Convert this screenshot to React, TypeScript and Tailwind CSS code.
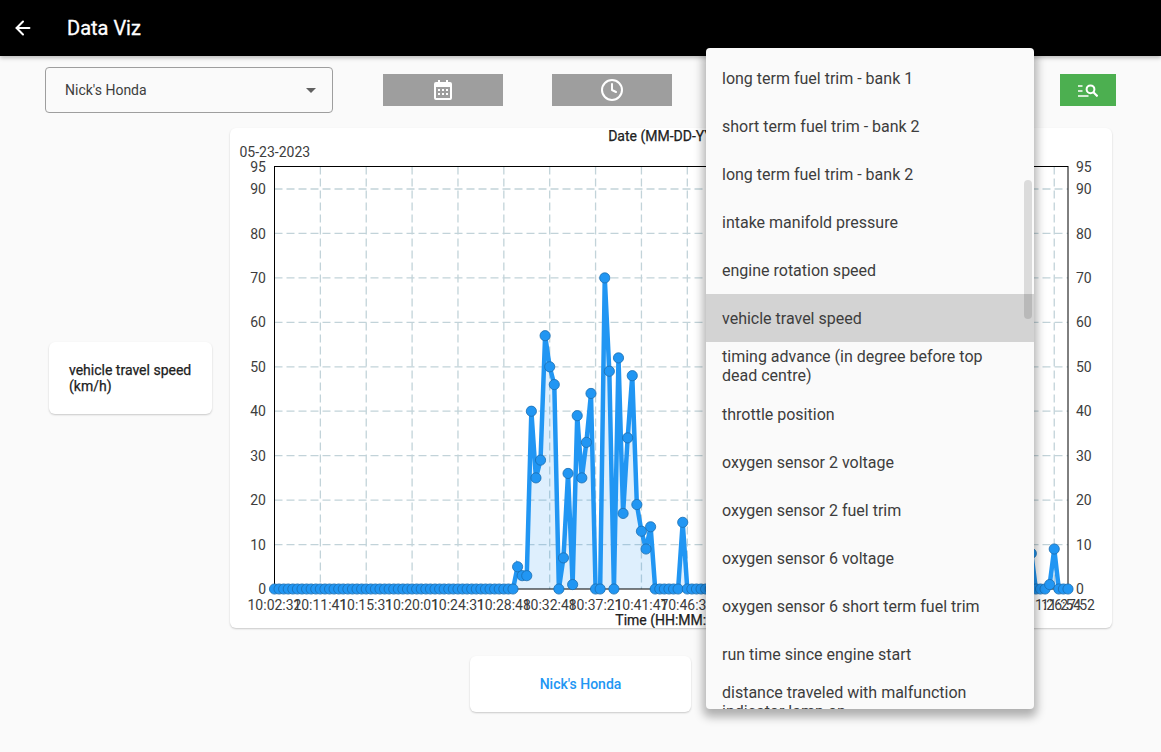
import { ArrowLeft, Clock } from "lucide-react";

const nonZero: Record<number, number> = {
  53: 5, 54: 3, 55: 3, 56: 40, 57: 25, 58: 29, 59: 57, 60: 50, 61: 46, 63: 7, 64: 26, 65: 1, 66: 39, 67: 25, 68: 33, 69: 44,
  72: 70, 73: 49, 75: 52, 76: 17, 77: 34, 78: 48, 79: 19, 80: 13, 81: 9, 82: 14, 89: 15, 165: 8, 169: 1, 170: 9,
};
const N = 174;
const LEFT = 274.5;
const RIGHT = 1068;
const TOP = 166.5;
const BASE = 589;
const px = (i: number) => LEFT + (i * (RIGHT - LEFT)) / (N - 1);
const py = (v: number) => BASE - (v * 400) / 90;
const pts = Array.from({ length: N }, (_, i) => ({ x: px(i), y: py(nonZero[i] ?? 0) }));
const line = pts.map((p) => `${p.x},${p.y}`).join(" ");
const yTicks = [0, 10, 20, 30, 40, 50, 60, 70, 80, 90, 95];
const xLabels = ["10:02:32", "10:11:41", "10:15:31", "10:20:01", "10:24:31", "10:28:48", "10:32:48", "10:37:21", "10:41:47", "10:46:37"];
const menu = [
  "long term fuel trim - bank 1",
  "short term fuel trim - bank 2",
  "long term fuel trim - bank 2",
  "intake manifold pressure",
  "engine rotation speed",
  "vehicle travel speed",
  "timing advance (in degree before top dead centre)",
  "throttle position",
  "oxygen sensor 2 voltage",
  "oxygen sensor 2 fuel trim",
  "oxygen sensor 6 voltage",
  "oxygen sensor 6 short term fuel trim",
  "run time since engine start",
  "distance traveled with malfunction indicator lamp on",
];

function Chart() {
  return (
    <svg width="882" height="500" viewBox="230 128 882 500" className="block" fontFamily="Roboto, sans-serif" fontSize="14">
      <text x="671.5" y="141" textAnchor="middle" fill="#212121" stroke="#212121" strokeWidth="0.25">Date (MM-DD-YYYY)</text>
      <text x="239.5" y="157" fill="#3d3d3d">05-23-2023</text>
      {yTicks.filter((t) => t !== 0 && t !== 95).map((t) => (
        <line key={t} x1={LEFT} x2={RIGHT} y1={py(t)} y2={py(t)} stroke="#c2d3d9" strokeWidth="1.3" strokeDasharray="8 4" />
      ))}
      {Array.from({ length: 17 }, (_, i) => (
        <line key={i} x1={px((i + 1) * 10)} x2={px((i + 1) * 10)} y1={TOP} y2={BASE} stroke="#c2d3d9" strokeWidth="1.3" strokeDasharray="8 4" />
      ))}
      <polygon points={`${LEFT},${BASE} ${line} ${RIGHT},${BASE}`} fill="#2196f3" fillOpacity="0.15" />
      <rect x={LEFT} y={TOP} width={RIGHT - LEFT} height={BASE - TOP} fill="none" stroke="#000" />
      <polyline points={line} fill="none" stroke="#2196f3" strokeWidth="4.5" strokeLinejoin="miter" />
      {pts.map((p, i) => (
        <circle key={i} cx={p.x} cy={p.y} r="5.1" fill="#2196f3" stroke="#1b6db0" strokeWidth="0.8" />
      ))}
      {yTicks.map((t) => (
        <text key={t} x="266" y={py(t) + 5.1} textAnchor="end" fill="#3d3d3d">{t}</text>
      ))}
      {yTicks.map((t) => (
        <text key={t} x="1076" y={py(t) + 5.1} fill="#3d3d3d">{t}</text>
      ))}
      {xLabels.map((l, i) => (
        <text key={l} x={px(i * 10)} y="610" textAnchor="middle" fill="#3d3d3d">{l}</text>
      ))}
      <text x={px(170)} y="610" textAnchor="middle" fill="#3d3d3d">11:26:54</text>
      <text x={px(173)} y="610" textAnchor="middle" fill="#3d3d3d">11:27:52</text>
      <text x="671.5" y="625" textAnchor="middle" fill="#212121" stroke="#212121" strokeWidth="0.25">Time (HH:MM:SS)</text>
    </svg>
  );
}

function SearchListIcon() {
  return (
    <svg width="20" height="14" viewBox="0 0 20 14" fill="none" stroke="#fff">
      <path d="M0 3h4.5M0 8h4.5M0 13h10.5" strokeWidth="1.6" />
      <circle cx="12.5" cy="6.3" r="3.9" strokeWidth="2" />
      <path d="M15.4 9.2L19.6 13.4" strokeWidth="2.2" />
    </svg>
  );
}

function CalendarIcon() {
  return (
    <svg width="18" height="20" viewBox="0 0 18 20" fill="#fff">
      <path d="M4 0h2v2h6V0h2v2h2a2 2 0 0 1 2 2v14a2 2 0 0 1-2 2H2a2 2 0 0 1-2-2V4a2 2 0 0 1 2-2h2V0zM2 7v11h14V7H2z" />
      <path d="M4 9h2v2H4zM8 9h2v2H8zM12 9h2v2h-2zM4 13h2v2H4zM8 13h2v2H8zM12 13h2v2h-2z" />
    </svg>
  );
}

export default function App() {
  return (
    <div className="relative h-[752px] w-[1161px] overflow-hidden bg-[#fafafa] font-['Roboto',sans-serif]">
      <header className="flex h-14 items-center bg-black pl-3 text-white shadow-[0_2px_4px_rgba(0,0,0,0.25)]">
        <ArrowLeft size={22} strokeWidth={2.2} />
        <h1 className="ml-[33px] text-[20px] [-webkit-text-stroke:0.3px_#fff]">Data Viz</h1>
      </header>

      <div className="mt-[11px] flex h-[46px] items-center pl-[45px]">
        <div className="flex h-[46px] w-[288px] items-center justify-between rounded border border-[#9e9e9e] pl-[19px] pr-4 text-[14px] text-[#3d3d3d]">
          <span>Nick's Honda</span>
          <span className="h-0 w-0 border-x-[5px] border-t-[5px] border-x-transparent border-t-[#616161]" />
        </div>
        <button className="ml-[50px] flex h-8 w-[120px] items-center justify-center bg-[#9e9e9e]">
          <CalendarIcon />
        </button>
        <button className="ml-[49px] flex h-8 w-[120px] items-center justify-center bg-[#9e9e9e] text-white">
          <Clock size={24} strokeWidth={2} />
        </button>
        <button className="ml-[388px] flex h-8 w-14 items-center justify-center bg-[#4caf50]">
          <SearchListIcon />
        </button>
      </div>

      <div className="mt-[15px] flex items-center pl-[49px]">
        <div className="flex h-[72px] w-[163px] items-center rounded-md bg-white pl-5 pr-4 text-[14px] leading-4 text-[#212121] shadow-[0_1px_2px_rgba(0,0,0,0.2)] [-webkit-text-stroke:0.25px_#212121]">
          vehicle travel speed (km/h)
        </div>
        <div className="ml-[18px] h-[500px] w-[882px] rounded-md bg-white shadow-[0_1px_2px_rgba(0,0,0,0.2)]">
          <Chart />
        </div>
      </div>

      <div className="ml-[470px] mt-7 flex h-14 w-[221px] items-center justify-center rounded-md bg-white text-[14px] font-medium text-[#2196f3] shadow-[0_1px_2px_rgba(0,0,0,0.2)]">
        Nick's Honda
      </div>

      <div className="absolute left-[706px] top-12 h-[661px] w-[328px] overflow-hidden rounded-sm bg-[#fafafa] pt-1.5 shadow-[0_5px_10px_3px_rgba(0,0,0,0.3)]">
        {menu.map((m, i) => (
          <div
            key={m}
            className={`flex h-12 items-center px-4 text-[16px] leading-[19px] text-[#3d3d3d] ${i === 5 ? "bg-[#d3d3d3]" : ""}`}
          >
            <span>{m}</span>
          </div>
        ))}
        <div className="absolute left-[318px] top-[132px] h-[139px] w-2 rounded bg-[rgba(0,0,0,0.12)]" />
      </div>
    </div>
  );
}
